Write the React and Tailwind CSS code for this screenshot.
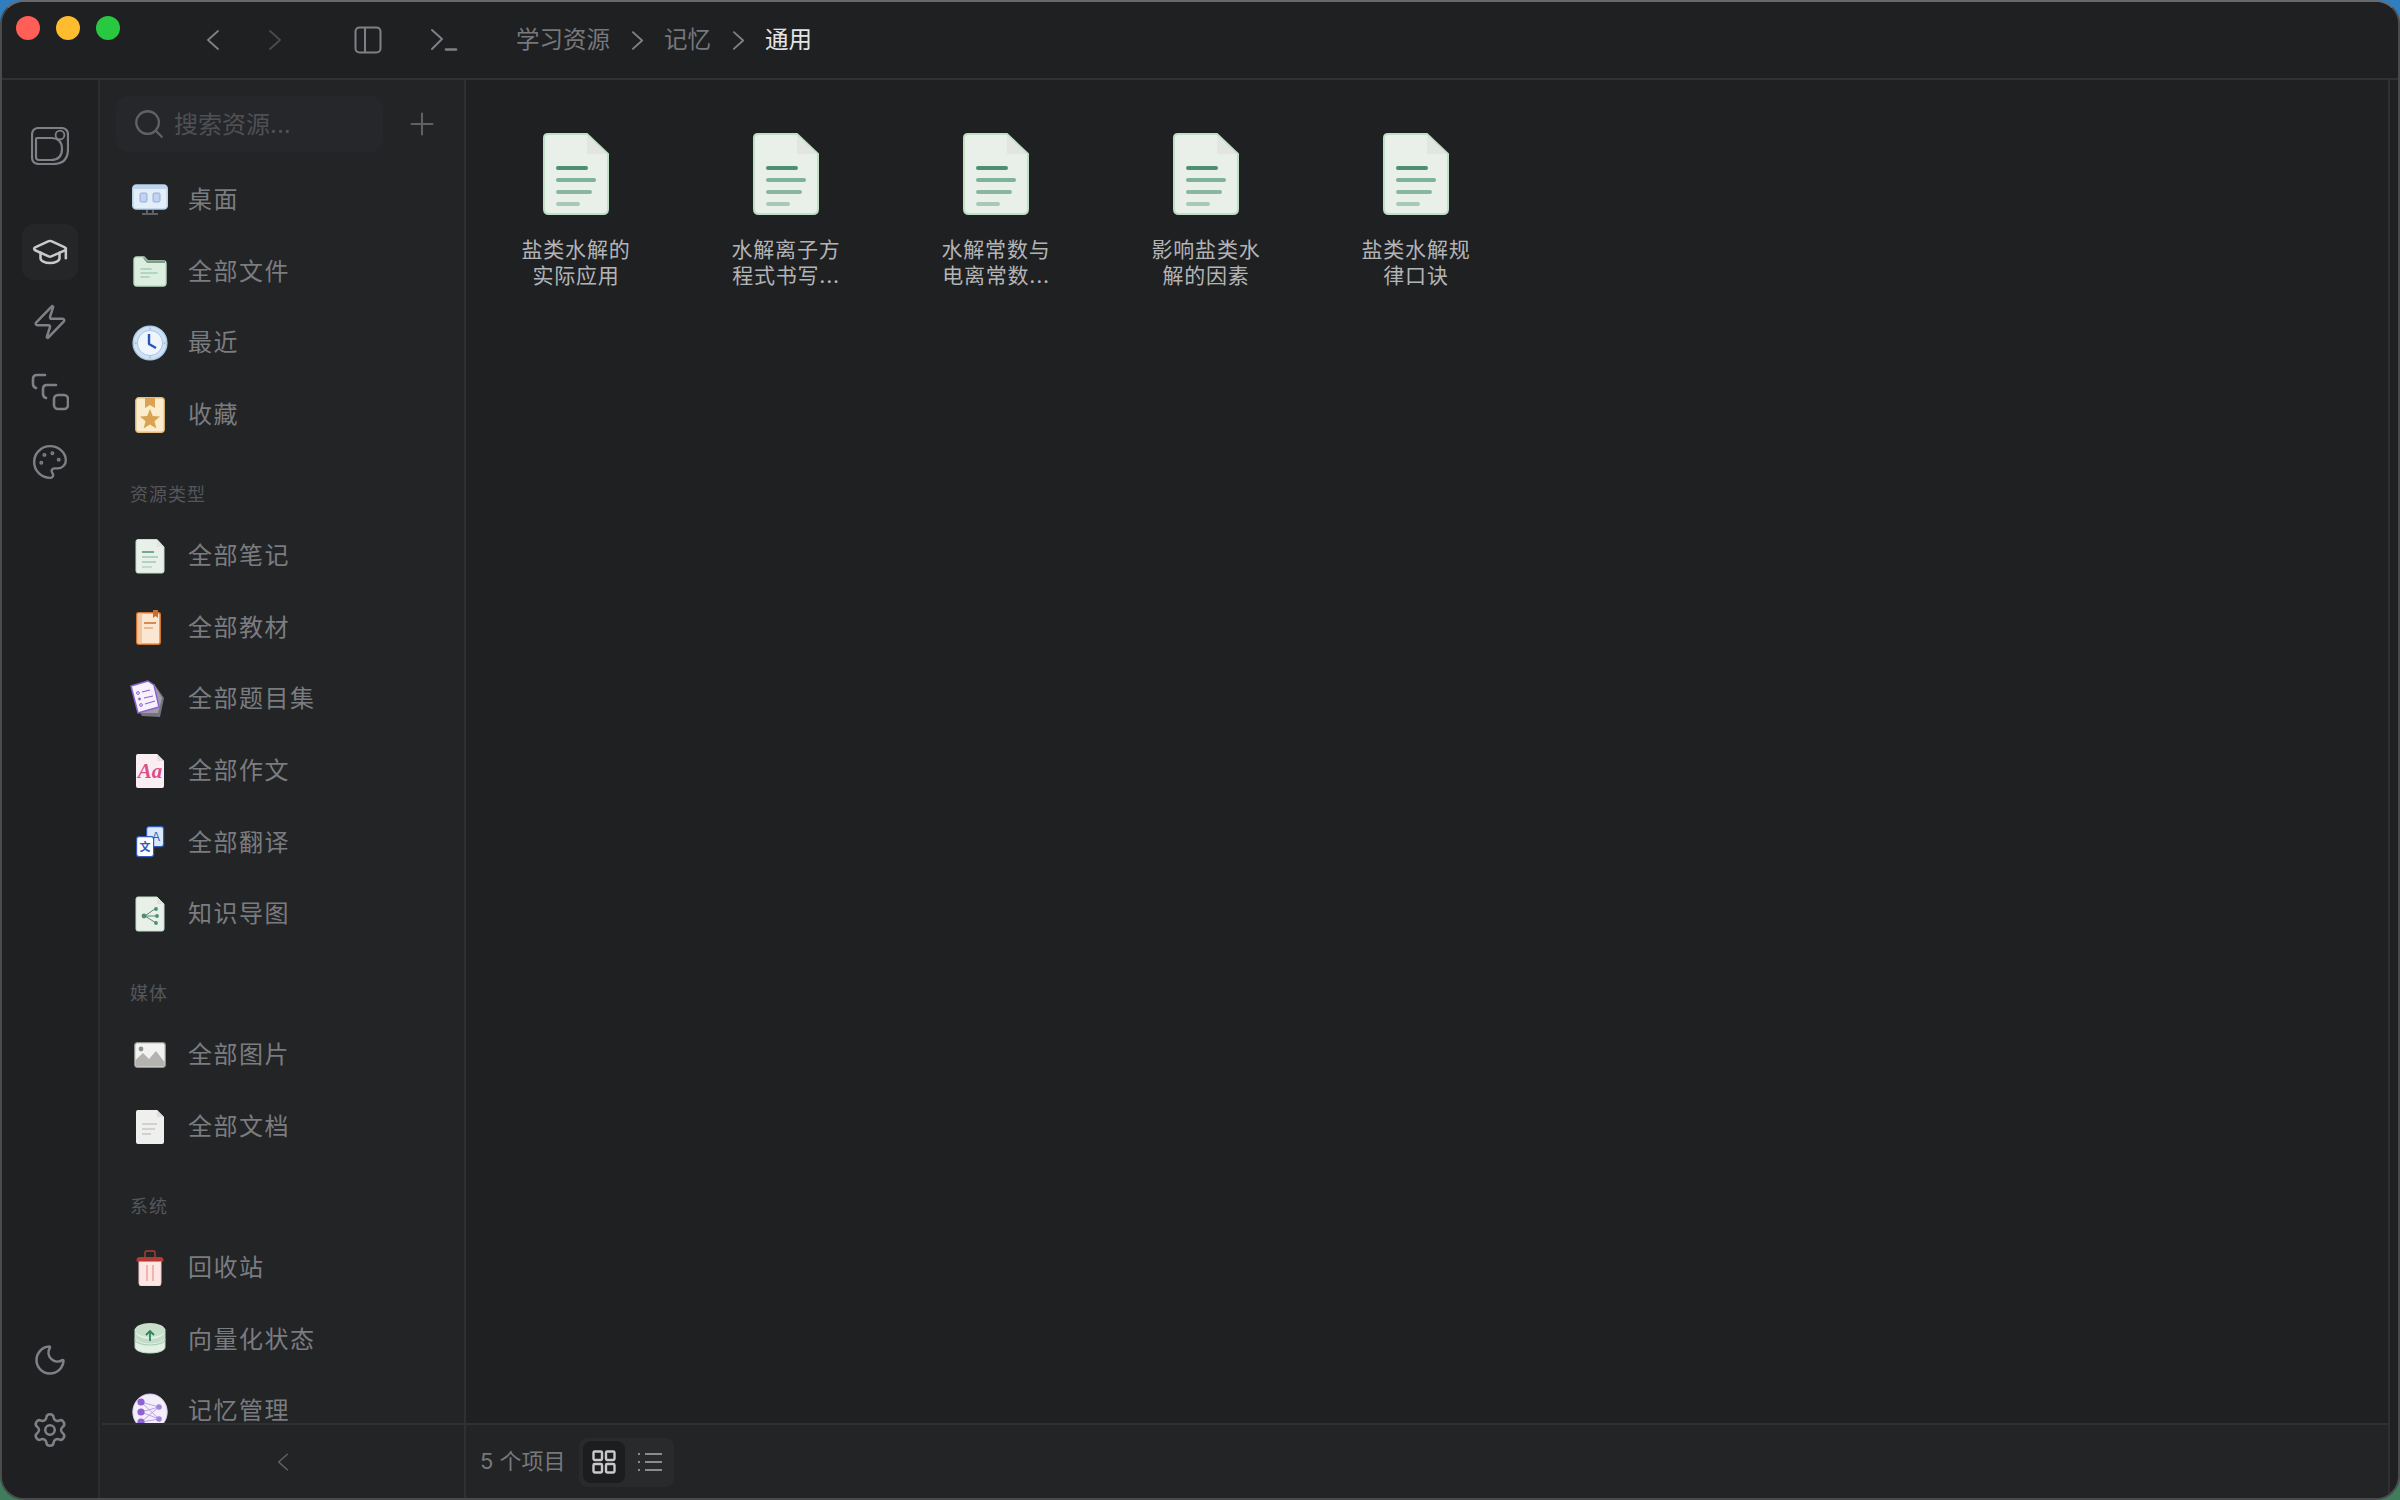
import { GraduationCap, Zap, Palette, Moon, Settings, Plus, Search } from 'lucide-react';

const FileIcon = ({ w = 66, h = 82, fill = '#e8f0e9', edge = '#bfe0c4', fold = '#e2e5e2', lines = ['#4d8f70', '#7fb29a', '#88b6a1', '#a8c9b8'] }) => (
  <svg width={w} height={h} viewBox="0 0 66 82">
    <path d="M5 1 H44 L65 21 V76 Q65 81 60 81 H6 Q1 81 1 76 V5 Q1 1 5 1Z" fill={fill} stroke={edge} strokeWidth="2" />
    <path d="M44 2 L64 21 H44Z" fill={fold} />
    <rect x="13" y="33" width="32" height="4" rx="2" fill={lines[0]} />
    <rect x="13" y="45" width="40" height="4" rx="2" fill={lines[1]} />
    <rect x="13" y="57" width="36" height="4" rx="2" fill={lines[2]} />
    <rect x="13" y="69" width="24" height="4" rx="2" fill={lines[3]} />
  </svg>
);

const Box = ({ children }) => (
  <svg width="36" height="36" viewBox="0 0 36 36">
    {children}
  </svg>
);

const DesktopIcon = () => (
  <Box>
    <rect x="0.8" y="3" width="34.4" height="24" rx="3.5" fill="#e4eef8" stroke="#b7d2ea" strokeWidth="1.6" />
    <path d="M1 7 Q1 3 4 3 H32 Q35 3 35 7Z" fill="#bdd6ec" />
    <rect x="8" y="11" width="7" height="9" rx="1.4" fill="#c3d3ef" stroke="#7f9fd6" strokeWidth="0.8" />
    <rect x="21" y="11" width="7" height="9" rx="1.4" fill="#c3d3ef" stroke="#7f9fd6" strokeWidth="0.8" />
    <path d="M15 28 V31 M21 28 V31 M10 32 H26" stroke="#6d7580" strokeWidth="1.5" />
  </Box>
);

const FolderIcon = () => (
  <Box>
    <path d="M2 6 Q2 3 5 3 H12 L16 7 H32 Q34 7 34 10 V29 Q34 32 31 32 H5 Q2 32 2 29Z" fill="#dceee0" stroke="#bcdcc2" strokeWidth="1.4" />
    <path d="M12 3 L16 7 H33 V9 H15 L11 4Z" fill="#7f9c86" />
    <path d="M9 15 H19 M9 19 H25 M9 23 H17" stroke="#a8ccb4" strokeWidth="1.6" strokeLinecap="round" />
  </Box>
);

const ClockIcon = () => (
  <Box>
    <circle cx="18" cy="18" r="17" fill="#cfe2f3" stroke="#a9c8e4" strokeWidth="1.2" />
    <circle cx="18" cy="18" r="12.6" fill="#eef5fc" stroke="#a8c4ea" strokeWidth="1" />
    <circle cx="18" cy="3.5" r="1.2" fill="#a9c8e4" />
    <circle cx="18" cy="32.5" r="1.2" fill="#a9c8e4" />
    <circle cx="3.5" cy="18" r="1.2" fill="#a9c8e4" />
    <circle cx="32.5" cy="18" r="1.2" fill="#a9c8e4" />
    <path d="M17 9 V19 L24 23" fill="none" stroke="#2a55b8" strokeWidth="2.4" strokeLinejoin="round" />
  </Box>
);

const FavoriteIcon = () => (
  <Box>
    <rect x="3.8" y="0.8" width="28.4" height="34.4" rx="3" fill="#fbeccd" stroke="#e6bd7c" strokeWidth="1.4" />
    <path d="M13 1 H23 V11 L18 8 L13 11Z" fill="#d9a352" />
    <path d="M18 12 L20.8 19 L28 19.6 L22.5 24.2 L24.4 31.4 L18 27.6 L11.6 31.4 L13.5 24.2 L8 19.6 L15.2 19Z" fill="#d9a352" />
  </Box>
);

const NoteIcon = () => (
  <Box>
    <path d="M6 1.5 H25 L32 9 V33 Q32 35 30 35 H6 Q4 35 4 33 V3.5 Q4 1.5 6 1.5Z" fill="#e8f0e9" stroke="#c3e0c8" strokeWidth="1" />
    <path d="M25 1.5 L32 9 H25Z" fill="#e2e5e2" />
    <path d="M10 14 H22" stroke="#4d8f70" strokeWidth="1.5" />
    <path d="M10 19 H26 M10 24 H24" stroke="#7fb29a" strokeWidth="1.1" />
    <path d="M10 29 H20" stroke="#a8c9b8" strokeWidth="1.1" />
  </Box>
);

const BookIcon = () => (
  <Box>
    <rect x="4.8" y="2.8" width="23.4" height="31.4" rx="1.6" fill="#fbe6d2" stroke="#cf7431" strokeWidth="1.6" />
    <rect x="5.5" y="3.5" width="4.5" height="30" fill="#f1c6a1" />
    <path d="M21 0 H26 V8 L23.5 6 L21 8Z" fill="#c96f2e" />
    <path d="M12 13 H24" stroke="#c96f2e" strokeWidth="1.5" />
    <path d="M12 18 H21" stroke="#dd9a66" strokeWidth="1.2" />
  </Box>
);

const ExerciseIcon = () => (
  <svg width="38" height="38" viewBox="0 0 38 38" className="-ml-[2px]">
    <path d="M24 4 L34 18 L30 37 L12 36 L8 30Z" fill="#77747f" />
    <path d="M24 4 L32 18 L28 33 L10 33Z" fill="#a09dab" />
    <path d="M1 6 L18 1 L24 5 L29 27 L8 33Z" fill="#f6f2fd" stroke="#8d62d0" strokeWidth="1.5" strokeLinejoin="round" />
    <circle cx="8" cy="13" r="1.4" fill="none" stroke="#8d62d0" strokeWidth="1" />
    <circle cx="9.5" cy="19" r="1.4" fill="#8d62d0" />
    <circle cx="11" cy="25" r="1.4" fill="none" stroke="#8d62d0" strokeWidth="1" />
    <path d="M12 12 L20 10 M14 18 L23 16 M15 24 L25 21" stroke="#8d62d0" strokeWidth="1.1" />
  </svg>
);

const EssayIcon = () => (
  <Box>
    <path d="M6 1 H25 L32 8 V33 Q32 35 30 35 H6 Q4 35 4 33 V3 Q4 1 6 1Z" fill="#fbeef3" />
    <path d="M25 1 L32 8 H25Z" fill="#e9dde1" />
    <text x="18" y="25" textAnchor="middle" fontFamily="Liberation Serif, serif" fontStyle="italic" fontWeight="700" fontSize="21" fill="#d94f8c">Aa</text>
  </Box>
);

const TranslateIcon = () => (
  <Box>
    <rect x="14.6" y="1.6" width="17" height="20" rx="2.4" fill="#dbe8fb" stroke="#2e5cb8" strokeWidth="1.2" />
    <text x="24" y="16" textAnchor="middle" fontFamily="Liberation Sans, sans-serif" fontSize="12" fill="#2e5cb8">A</text>
    <rect x="4.6" y="11.6" width="17" height="20" rx="2.4" fill="#fff" stroke="#2e5cb8" strokeWidth="1.2" />
    <text x="13" y="26" textAnchor="middle" fontFamily="Noto Sans CJK SC, sans-serif" fontWeight="700" fontSize="11" fill="#2e5cb8">文</text>
  </Box>
);

const MapIcon = () => (
  <Box>
    <path d="M6 1 H25 L32 8 V33 Q32 35 30 35 H6 Q4 35 4 33 V3 Q4 1 6 1Z" fill="#e8f0e9" stroke="#c3e0c8" strokeWidth="1" />
    <path d="M25 1 L32 8 H25Z" fill="#dfe3df" />
    <path d="M13 20 H26 M13 20 L24 12 M13 20 L24 27" stroke="#4d8f70" strokeWidth="1" />
    <circle cx="12" cy="20" r="2.4" fill="#4d8f70" />
    <circle cx="24" cy="13" r="1.9" fill="#4d8f70" />
    <circle cx="25" cy="20" r="1.9" fill="#4d8f70" />
    <circle cx="24" cy="27" r="1.9" fill="#4d8f70" />
  </Box>
);

const ImageIcon = () => (
  <Box>
    <rect x="2.7" y="5.7" width="30.6" height="24.6" rx="2.5" fill="#f2f2f0" stroke="#8f8f8d" strokeWidth="1.2" />
    <circle cx="9" cy="12" r="2.4" fill="#8e8e8c" />
    <path d="M3.5 29.5 V23 L11 16 L17 22 L24 14 L32.5 25 V29.5Z" fill="#b4b3b0" />
  </Box>
);

const DocIcon = () => (
  <Box>
    <path d="M6 1 H25 L32 8 V33 Q32 35 30 35 H6 Q4 35 4 33 V3 Q4 1 6 1Z" fill="#efefed" />
    <path d="M25 1 L32 8 H25Z" fill="#dededc" />
    <path d="M10 15 H25 M10 20 H23 M10 25 H19" stroke="#c8c8c4" strokeWidth="1.4" />
  </Box>
);

const TrashIcon = () => (
  <Box>
    <path d="M13 7 V2.5 Q13 1 14.5 1 H21.5 Q23 1 23 2.5 V7" fill="none" stroke="#b23b35" strokeWidth="1.4" />
    <path d="M7 11 H29 V33 Q29 36 26.5 36 H9.5 Q7 36 7 33Z" fill="#fde7e5" stroke="#f6c8c4" strokeWidth="1" />
    <path d="M4.5 10 Q4.5 7 8 7 H28 Q31.5 7 31.5 10 V11.5 H4.5Z" fill="#b23b35" />
    <path d="M15 15 V31 M21 15 V31" stroke="#f0908a" strokeWidth="1.2" />
  </Box>
);

const VectorIcon = () => (
  <Box>
    <path d="M3 7 V25 C3 33 33 33 33 25 V7Z" fill="#e3f0e6" stroke="#bcdcc2" strokeWidth="1" />
    <path d="M3 17 C3 25 33 25 33 17" fill="none" stroke="#a8cfb2" strokeWidth="1.2" />
    <ellipse cx="18" cy="8" rx="15" ry="7" fill="#c9dfc9" />
    <path d="M3 8 C3 20 33 20 33 8 V14 C33 24 3 24 3 14Z" fill="#c2dcc8" />
    <path d="M18 19 V9 M14 13 L18 9 L22 13" fill="none" stroke="#2f8562" strokeWidth="1.8" />
  </Box>
);

const MemoryIcon = () => (
  <Box>
    <ellipse cx="18" cy="19" rx="17.2" ry="18" fill="#f3effa" stroke="#d7cbee" strokeWidth="1" />
    <path d="M9 9 L27 14 M9 9 L27 26 M9 19 L27 14 M9 19 L27 26 M9 29 L27 14 M9 29 L27 26" stroke="#b79be4" strokeWidth="0.9" />
    <circle cx="9" cy="9" r="3.6" fill="#8f62d6" />
    <circle cx="9" cy="19" r="3.6" fill="#8f62d6" />
    <circle cx="9" cy="29" r="3.6" fill="#8f62d6" />
    <circle cx="27" cy="14" r="2.8" fill="#a582de" />
    <circle cx="27" cy="26" r="2.8" fill="#a582de" />
  </Box>
);

const Logo = () => (
  <svg width="38" height="38" viewBox="0 0 38 38" fill="none" stroke="#7f8085" strokeWidth="2.2">
    <path d="M8 1 H30 Q37 1 37 8 V22 Q37 37 22 37 H8 Q1 37 1 30 V8 Q1 1 8 1Z" />
    <path d="M6 11 H20 Q31 11 31 22 Q31 33 20 33 H8 Q5 33 5 30 V12 Q5 11 6 11Z" />
    <circle cx="29" cy="8" r="4.4" fill="#1f2022" strokeWidth="1.8" />
  </svg>
);

const ChainIcon = () => (
  <svg width="38" height="38" viewBox="0 0 38 38" fill="none" stroke="#7f8085" strokeWidth="2.6" strokeLinecap="round">
    <path d="M14 2 H6 Q2 2 2 6 V11 Q2 14 5 15" />
    <path d="M25 12 H16 Q12 12 12 16 V21 Q12 24 15 25" />
    <rect x="23" y="22" width="14" height="14" rx="4" />
  </svg>
);

const Chevron = ({ left, w = 14, h = 20, color = '#7f8085', sw = 1.8 }) => (
  <svg width={w} height={h} viewBox="0 0 14 20" fill="none" stroke={color} strokeWidth={sw} strokeLinecap="round" strokeLinejoin="round">
    <path d={left ? 'M12 1 L2 10 L12 19' : 'M2 1 L12 10 L2 19'} />
  </svg>
);

const PanelIcon = () => (
  <svg width="28" height="28" viewBox="0 0 28 28" fill="none" stroke="#7f8085" strokeWidth="2">
    <rect x="1.5" y="1.5" width="25" height="25" rx="4" />
    <path d="M11 1.5 V26.5" />
  </svg>
);

const TerminalIcon = () => (
  <svg width="28" height="24" viewBox="0 0 28 24" fill="none" stroke="#7f8085" strokeWidth="2" strokeLinecap="round" strokeLinejoin="round">
    <path d="M2 2 L12 11 L2 21" />
    <path d="M16 21.5 H26" strokeWidth="2.6" />
  </svg>
);

const GridIcon = () => (
  <svg width="24" height="24" viewBox="0 0 24 24" fill="none" stroke="#c9c9cb" strokeWidth="2.4">
    <rect x="1.5" y="1.5" width="8.5" height="8.5" rx="1.2" />
    <rect x="14" y="1.5" width="8.5" height="8.5" rx="1.2" />
    <rect x="1.5" y="14" width="8.5" height="8.5" rx="1.2" />
    <rect x="14" y="14" width="8.5" height="8.5" rx="1.2" />
  </svg>
);

const ListIcon = () => (
  <svg width="24" height="22" viewBox="0 0 24 22" fill="none" stroke="#8b8c90" strokeWidth="2.2">
    <path d="M7 3 H24 M7 11 H24 M7 19 H24" />
    <path d="M0 3 H2 M0 11 H2 M0 19 H2" />
  </svg>
);

const railIcons = [
  <ChainIcon key="chain" />,
  <Palette key="palette" size={38} color="#7f8085" strokeWidth={1.5} />,
];

const sections = [
  {
    items: [
      ['桌面', <DesktopIcon />],
      ['全部文件', <FolderIcon />],
      ['最近', <ClockIcon />],
      ['收藏', <FavoriteIcon />],
    ],
  },
  {
    title: '资源类型',
    items: [
      ['全部笔记', <NoteIcon />],
      ['全部教材', <BookIcon />],
      ['全部题目集', <ExerciseIcon />],
      ['全部作文', <EssayIcon />],
      ['全部翻译', <TranslateIcon />],
      ['知识导图', <MapIcon />],
    ],
  },
  {
    title: '媒体',
    items: [
      ['全部图片', <ImageIcon />],
      ['全部文档', <DocIcon />],
    ],
  },
  {
    title: '系统',
    items: [
      ['回收站', <TrashIcon />],
      ['向量化状态', <VectorIcon />],
      ['记忆管理', <MemoryIcon />],
    ],
  },
];

const files = ['盐类水解的实际应用', '水解离子方程式书写...', '水解常数与电离常数...', '影响盐类水解的因素', '盐类水解规律口诀'];

const Header = () => (
  <header className="h-[78px] shrink-0 flex items-center border-b-2 border-[#303134] bg-[#1f2022]">
    <div className="flex gap-[16px] pl-[14px] self-start mt-[14px]">
      <span className="w-[24px] h-[24px] rounded-full bg-[#ff5f57]" />
      <span className="w-[24px] h-[24px] rounded-full bg-[#febc2e]" />
      <span className="w-[24px] h-[24px] rounded-full bg-[#28c840]" />
    </div>
    <div className="ml-[86px]"><Chevron left /></div>
    <div className="ml-[48px]"><Chevron color="#4a4b4f" /></div>
    <div className="ml-[72px]"><PanelIcon /></div>
    <div className="ml-[48px]"><TerminalIcon /></div>
    <nav className="ml-[58px] flex items-center text-[23.5px]">
      <span className="text-[#77787c]">学习资源</span>
      <span className="mx-[20.5px]"><Chevron w={13} h={19} sw={2} /></span>
      <span className="text-[#77787c]">记忆</span>
      <span className="mx-[20.5px]"><Chevron w={13} h={19} sw={2} /></span>
      <span className="text-[#e4e4e5]">通用</span>
    </nav>
  </header>
);

const Rail = () => (
  <aside className="w-[98px] shrink-0 flex flex-col items-center border-r-2 border-[#2c2d30] bg-[#1f2022] pt-[47px] pb-[40px]">
    <Logo />
    <div className="mt-[59px] w-[56px] h-[56px] flex items-center justify-center rounded-[12px] bg-[#252628]">
      <GraduationCap size={38} color="#c8c9cb" strokeWidth={1.6} />
    </div>
    <div className="mt-[14px] w-[56px] h-[56px] flex items-center justify-center">
      <Zap size={38} color="#7f8085" strokeWidth={1.6} />
    </div>
    {railIcons.map((icon, i) => (
      <div key={i} className="mt-[14px] w-[56px] h-[56px] flex items-center justify-center">
        {icon}
      </div>
    ))}
    <div className="mt-auto w-[56px] h-[56px] flex items-center justify-center">
      <Moon size={36} color="#7f8085" strokeWidth={1.7} />
    </div>
    <div className="mt-[14px] w-[56px] h-[56px] flex items-center justify-center">
      <Settings size={38} color="#7f8085" strokeWidth={1.6} />
    </div>
  </aside>
);

const Sidebar = () => (
  <aside className="w-[366px] shrink-0 flex flex-col border-r-2 border-[#2f3034] bg-[#232426]">
    <div className="flex-1 min-h-0 overflow-hidden">
      <div className="pt-[16px] pl-[16px] flex items-center">
        <div className="w-[267px] h-[56px] flex items-center gap-[8px] rounded-[12px] bg-[#26272a] pl-[16px]">
          <Search size={34} color="#606165" strokeWidth={1.6} />
          <span className="pt-[2px] text-[24px] text-[#4f5054]">搜索资源...</span>
        </div>
        <Plus className="ml-[21px]" size={36} color="#606165" strokeWidth={1.4} />
      </div>
      {sections.map((section, i) => (
        <div key={i} className={section.title ? '' : 'pt-[12.5px]'}>
          {section.title && (
            <div className="pt-[32.5px] pb-[13px] pl-[30px] text-[18px] leading-[24px] tracking-[1px] text-[#55565a]">
              {section.title}
            </div>
          )}
          {section.items.map(([label, icon]) => (
            <div key={label} className="h-[71.6px] flex items-center gap-[20px] pl-[32px]">
              <span className="w-[36px] h-[36px] flex items-center justify-center">{icon}</span>
              <span className="text-[24px] tracking-[1.5px] text-[#7b7c80]">{label}</span>
            </div>
          ))}
        </div>
      ))}
    </div>
    <div className="h-[75px] shrink-0 flex items-center justify-center border-t-2 border-[#2f3034] ml-[2px]">
      <Chevron left w={12} h={18} color="#606165" />
    </div>
  </aside>
);

const FileCard = ({ name }) => (
  <div className="w-[120px] flex flex-col items-center">
    <FileIcon />
    <div className="mt-[22px] w-[112px] text-center text-[21px] leading-[26px] tracking-[0.8px] text-[#b3b4b6]">{name}</div>
  </div>
);

const Main = () => (
  <main className="flex-1 min-w-0 flex flex-col bg-[#1f2022] border-r-2 border-[#2f3034] mr-[8px]">
    <div className="flex-1 flex items-start gap-[90px] pl-[50px] pt-[53px]">
      {files.map(f => <FileCard key={f} name={f} />)}
    </div>
    <div className="h-[75px] shrink-0 flex items-center border-t-2 border-[#2f3034] bg-[#232426] pl-[14px]">
      <span className="text-[22px] text-[#77787c]">5 个项目</span>
      <div className="ml-[13px] w-[95px] h-[49px] flex items-center rounded-[8px] bg-[#292a2c] pl-[4px] mt-[1px]">
        <span className="w-[42px] h-[42px] flex items-center justify-center rounded-[8px] bg-[#1c1d1f]"><GridIcon /></span>
        <span className="ml-[13px]"><ListIcon /></span>
      </div>
    </div>
  </main>
);

export default function App() {
  return (
    <div className="w-[2400px] h-[1500px] overflow-hidden bg-gradient-to-b from-[#2f7fc0] to-[#3f7d5c] font-['Inter','Noto_Sans_CJK_SC',sans-serif]">
      <div className="w-full h-full flex flex-col overflow-hidden rounded-[24px] border-2 border-[#4a4b4d] border-t-[#69696b] bg-[#1f2022]">
        <Header />
        <div className="flex-1 min-h-0 flex">
          <Rail />
          <Sidebar />
          <Main />
        </div>
      </div>
    </div>
  );
}
